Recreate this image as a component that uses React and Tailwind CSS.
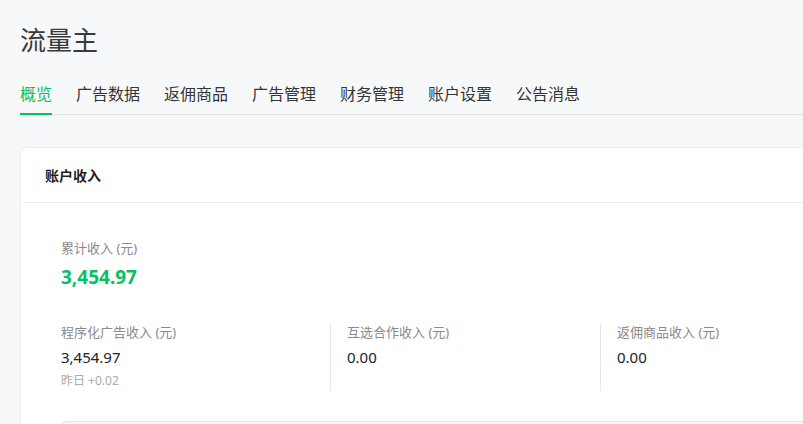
import React from 'react';

const tabs = ['概览', '广告数据', '返佣商品', '广告管理', '财务管理', '账户设置', '公告消息'];

const incomes = [
  { label: '程序化广告收入 (元)', value: '3,454.97', extra: '昨日 +0.02' },
  { label: '互选合作收入 (元)', value: '0.00' },
  { label: '返佣商品收入 (元)', value: '0.00' },
];

function App() {
  return (
    <div
      className="min-h-screen w-[803px] h-[424px] overflow-hidden bg-[#f7f8fa] pl-5"
      style={{ fontFamily: '"Noto Sans", "Noto Sans CJK SC", sans-serif' }}
    >
      <h1 className="pt-[22px] text-[26px] leading-[36px] font-normal text-[#3a3a3a]">流量主</h1>

      <nav className="mt-[14px] flex gap-6 border-b border-[#e2e3e6]">
        {tabs.map((tab, i) => (
          <div
            key={tab}
            className={`-mb-px pt-[10px] pb-[7px] text-[16px] leading-6 border-b-2 ${
              i === 0 ? 'border-[#07c160] text-[#07c160]' : 'border-transparent text-[#353535]'
            }`}
          >
            {tab}
          </div>
        ))}
      </nav>

      <div className="mt-8 w-[1100px] rounded-[6px] border border-[#ebedf0] bg-white">
        <div className="h-[55px] flex items-center border-b border-[#ebedf0] pl-6 text-[14px] font-bold text-[#1f1f1f]">
          账户收入
        </div>

        <div className="px-10 pt-[35px]">
          <div className="text-[13px] leading-5 text-[#8a8a8a]">累计收入 (元)</div>
          <div className="mt-[5px] text-[19px] leading-7 font-bold text-[#07c160]">3,454.97</div>

          <div className="mt-[32px] flex">
            {incomes.map((item, i) => (
              <div
                key={item.label}
                className={`h-[68px] ${i === 0 ? 'w-[269px]' : 'w-[270px] border-l border-[#e7e7e7] pl-4'}`}
              >
                <div className="text-[13px] leading-[18px] text-[#8a8a8a]">{item.label}</div>
                <div className="mt-1 text-[15px] leading-6 font-normal text-[#222]">{item.value}</div>
                {item.extra && (
                  <div className="mt-[3px] text-[12px] leading-[18px] text-[#aaa]">{item.extra}</div>
                )}
              </div>
            ))}
          </div>

          <div className="mt-[30px] h-20 rounded-[4px] border border-[#cdeee0] bg-[#f2fcf7]"></div>
        </div>
      </div>
    </div>
  );
}

export default App;
